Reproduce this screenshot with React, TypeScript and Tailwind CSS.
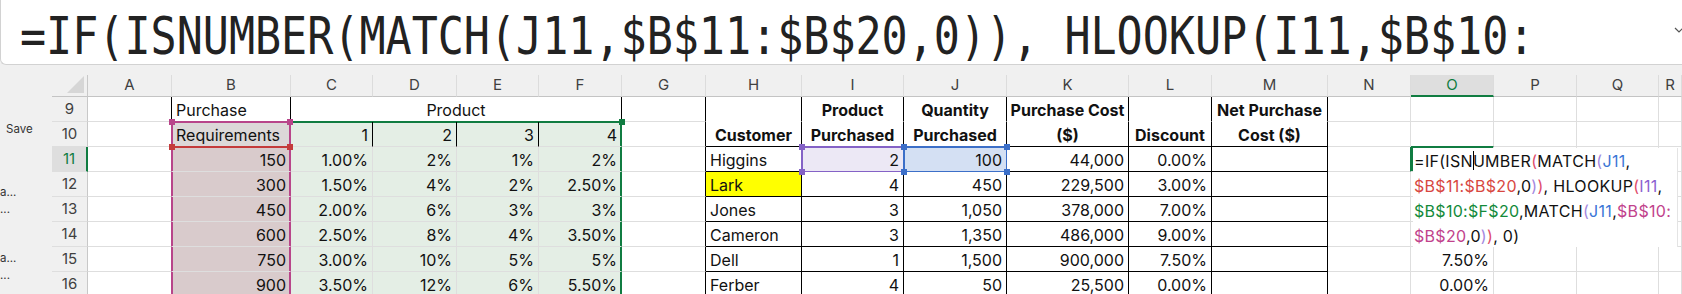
import React from 'react';

type Cell = {
  t?: React.ReactNode;
  al?: 'l' | 'r' | 'c';
  b?: boolean;
  bg?: string;
  br?: string;
  bb?: string;
  span?: string;
  fx?: string;
};

const COLS = ['A', 'B', 'C', 'D', 'E', 'F', 'G', 'H', 'I', 'J', 'K', 'L', 'M', 'N', 'O', 'P', 'Q', 'R'];

const BK = 'border-r-black';
const BBK = 'border-b-black';
const BBW = 'border-b-white';
const GRN = 'bg-[#e4eee5]';
const PNK = 'bg-[#d9cbcc]';
const MAGR = 'border-r-[#b8458a]';
const GRR = 'border-r-[#107c41]';

const ALIGN = { l: 'justify-start', r: 'justify-end', c: 'justify-center' };

const blank = (n: number): Cell[] => Array.from({ length: n }, () => ({}));

const data = [
  ['150', '1.00%', '2%', '1%', '2%', 'Higgins', '2', '100', '44,000', '0.00%'],
  ['300', '1.50%', '4%', '2%', '2.50%', 'Lark', '4', '450', '229,500', '3.00%'],
  ['450', '2.00%', '6%', '3%', '3%', 'Jones', '3', '1,050', '378,000', '7.00%'],
  ['600', '2.50%', '8%', '4%', '3.50%', 'Cameron', '3', '1,350', '486,000', '9.00%'],
  ['750', '3.00%', '10%', '5%', '5%', 'Dell', '1', '1,500', '900,000', '7.50%'],
  ['900', '3.50%', '12%', '6%', '5.50%', 'Ferber', '4', '50', '25,500', '0.00%'],
];

const head = (t: string, bb = BBW): Cell => ({ t, al: 'c', b: true, br: BK, bb });

const rows: { n: number; cells: Cell[] }[] = [
  {
    n: 9,
    cells: [
      { br: BK },
      { t: 'Purchase', al: 'l', br: BK, bb: 'border-b-[#b8458a]' },
      { t: 'Product', al: 'c', br: BK, bb: 'border-b-[#107c41]', span: 'col-span-4' },
      { br: BK },
      head(''),
      head('Product'),
      head('Quantity'),
      head('Purchase Cost'),
      head(''),
      head('Net Purchase'),
      ...blank(5),
    ],
  },
  {
    n: 10,
    cells: [
      { br: MAGR },
      {
        t: 'Requirements',
        al: 'l',
        bg: 'bg-[#dcd8d8]',
        br: MAGR,
        bb: 'border-b-[#c43b3b]',
        fx: 'shadow-[inset_1px_1px_0_#b8458a,inset_-1px_0_0_#b8458a]',
      },
      { t: '1', bg: GRN, br: BK, fx: 'shadow-[inset_0_1px_0_#107c41]' },
      { t: '2', bg: GRN, br: BK, fx: 'shadow-[inset_0_1px_0_#107c41]' },
      { t: '3', bg: GRN, br: BK, fx: 'shadow-[inset_0_1px_0_#107c41]' },
      { t: '4', bg: GRN, br: GRR, fx: 'shadow-[inset_0_1px_0_#107c41,inset_-1px_0_0_#107c41]' },
      { br: BK },
      head('Customer', BBK),
      head('Purchased', BBK),
      head('Purchased', BBK),
      head('($)', BBK),
      head('Discount', BBK),
      head('Cost ($)', BBK),
      {},
      { bb: 'border-b-[#107c41]' },
      ...blank(3),
    ],
  },
  ...data.map((d, i) => ({
    n: 11 + i,
    cells: [
      { br: MAGR },
      {
        t: d[0],
        bg: PNK,
        br: MAGR,
        fx:
          i === 0
            ? 'shadow-[inset_0_1px_0_#c43b3b,inset_1px_0_0_#b8458a,inset_-1px_0_0_#b8458a]'
            : 'shadow-[inset_1px_0_0_#b8458a,inset_-1px_0_0_#b8458a]',
      },
      { t: d[1], bg: GRN },
      { t: d[2], bg: GRN },
      { t: d[3], bg: GRN },
      { t: d[4], bg: GRN, br: GRR, fx: 'shadow-[inset_-1px_0_0_#107c41]' },
      { br: BK },
      { t: d[5], al: 'l', br: BK, bb: BBK, bg: i === 1 ? 'bg-[#ffff00]' : undefined },
      {
        t: d[6],
        br: BK,
        bb: BBK,
        bg: i === 0 ? 'bg-[#ece8f5]' : undefined,
        fx: i === 0 ? 'outline-2 -outline-offset-1 outline-[#8462c6]' : undefined,
      },
      {
        t: d[7],
        br: BK,
        bb: BBK,
        bg: i === 0 ? 'bg-[#d4e0f3]' : undefined,
        fx: i === 0 ? 'outline-2 -outline-offset-1 outline-[#3c6fc8]' : undefined,
      },
      { t: d[8], br: BK, bb: BBK },
      { t: d[9], br: BK, bb: BBK },
      { br: BK, bb: BBK },
      { br: i === 0 ? GRR : undefined },
      {
        t: i === 4 ? '7.50%' : i === 5 ? '0.00%' : undefined,
        fx: i === 0 ? 'shadow-[inset_2px_1px_0_#107c41]' : undefined,
      },
      {},
      {},
      {},
    ] as Cell[],
  })),
];

function SheetCell({ c }: { c: Cell }) {
  return (
    <div
      className={`flex items-end overflow-visible whitespace-nowrap border-r border-b px-[4px] pb-px leading-[19px] ${ALIGN[c.al ?? 'r']} ${c.b ? 'font-bold' : ''} ${c.bg ?? 'bg-white'} ${c.br ?? 'border-r-[#dedede]'} ${c.bb ?? 'border-b-[#dedede]'} ${c.span ?? ''} ${c.fx ?? ''}`}
    >
      {c.t}
    </div>
  );
}

const P2 = 'text-[#de4c6c]';
const P3 = 'text-[#a488e0]';
const RED = 'text-[#d8473f]';
const BLU = 'text-[#3b76d6]';
const PUR = 'text-[#8b60d0]';
const GR = 'text-[#138a3a]';
const MAG = 'text-[#c1428c]';

function Caret() {
  return (
    <span className="relative inline-block w-0">
      <span className="absolute left-0 top-[-16px] h-[19px] w-px bg-black" />
    </span>
  );
}

export default function App() {
  return (
    <div className="h-[294px] w-[1682px] overflow-hidden bg-[#f0f0f0] font-['Inter',sans-serif]">
      {/* formula bar */}
      <div className="relative h-[65px] overflow-hidden rounded-bl-[6px] border-b border-l border-[#d2d2d2] bg-white">
        <div className="whitespace-nowrap pl-[19px] pt-[10px]">
          <span className="inline-block origin-left scale-x-[0.834] font-['DejaVu_Sans_Mono',monospace] text-[52px] leading-[52px] text-[#222]">
            =IF(ISNUMBER(MATCH(J11,$B$11:$B$20,0)), HLOOKUP(I11,$B$10:
          </span>
        </div>
        <svg className="absolute left-[1673px] top-[27px]" width="10" height="6" viewBox="0 0 10 6">
          <polyline points="1,1 5,5 9,1" fill="none" stroke="#555" strokeWidth="1.2" />
        </svg>
      </div>

      <div className="mt-[10px] flex">
        {/* side panel */}
        <div className="flex w-[52px] flex-col text-[11.5px] leading-[16px] text-[#333]">
          <div className="ml-[6px] mt-[46px]">Save</div>
          <div className="mt-[47px]">a...</div>
          <div className="mt-px">...</div>
          <div className="mt-[33px]">a...</div>
          <div className="mt-px">...</div>
        </div>

        {/* sheet */}
        <div className="relative flex-1 text-[16px] text-[#111]">
          <div className="grid grid-cols-[36px_84px_119px_82px_84px_82px_83px_84px_96px_102px_103px_122px_83px_116px_83px_83px_83px_82px_1fr] grid-rows-[22px_repeat(8,25px)]">
            <div className="flex items-end justify-end border-r border-b border-r-[#c8c8c8] border-b-[#c4c4c4] bg-[#f0f0f0] pr-[3px] pb-[3px]">
              <svg width="17" height="17" viewBox="0 0 17 17">
                <polygon points="17,0 17,17 0,17" fill="#d6d6d6" />
              </svg>
            </div>
            {COLS.map((l) => (
              <div
                key={l}
                className={
                  l === 'O'
                    ? 'flex items-center justify-center border-r border-b-2 border-r-[#dcdcdc] border-b-[#107c41] bg-[#dedede] text-[15px] text-[#107c41]'
                    : 'flex items-center justify-center border-r border-b border-r-[#dcdcdc] border-b-[#c4c4c4] bg-[#f0f0f0] text-[15px] text-[#404040]'
                }
              >
                {l}
              </div>
            ))}
            {rows.map((r) => (
              <React.Fragment key={r.n}>
                <div
                  className={
                    r.n === 11
                      ? 'flex items-center justify-center border-r-2 border-b border-r-[#107c41] border-b-[#dedede] bg-[#dedede] text-[15px] text-[#107c41]'
                      : 'flex items-center justify-center border-r border-b border-r-[#c8c8c8] border-b-[#dedede] bg-[#f0f0f0] text-[15px] text-[#404040]'
                  }
                >
                  {r.n}
                </div>
                {r.cells.map((c, i) => (
                  <SheetCell key={i} c={c} />
                ))}
              </React.Fragment>
            ))}
          </div>

          {/* range corner handles */}
          <div className="absolute left-[117px] top-[44px] h-[6px] w-[6px] bg-[#b8458a]" />
          <div className="absolute left-[235px] top-[44px] h-[6px] w-[6px] bg-[#b8458a]" />
          <div className="absolute left-[117px] top-[69px] h-[6px] w-[6px] bg-[#c43b3b]" />
          <div className="absolute left-[235px] top-[69px] h-[6px] w-[6px] bg-[#c43b3b]" />
          <div className="absolute left-[567px] top-[44px] h-[6px] w-[6px] bg-[#107c41]" />
          <div className="absolute left-[747px] top-[69px] h-[6px] w-[6px] bg-[#8462c6]" />
          <div className="absolute left-[747px] top-[94px] h-[6px] w-[6px] bg-[#8462c6]" />
          <div className="absolute left-[849px] top-[69px] h-[6px] w-[6px] bg-[#3c6fc8]" />
          <div className="absolute left-[952px] top-[69px] h-[6px] w-[6px] bg-[#3c6fc8]" />
          <div className="absolute left-[849px] top-[94px] h-[6px] w-[6px] bg-[#3c6fc8]" />
          <div className="absolute left-[952px] top-[94px] h-[6px] w-[6px] bg-[#3c6fc8]" />

          {/* in-cell editor over O11 */}
          <div className="absolute left-[1361px] top-[73px] h-[99px] w-[265px] whitespace-nowrap border-r border-r-[#e4e4e4] bg-white pl-px pt-px leading-[25px] tracking-[0.3px]">
            <div>
              =IF(ISN<Caret />UMBER<span className={P2}>(</span>MATCH<span className={P3}>(</span>
              <span className={BLU}>J11</span>,
            </div>
            <div>
              <span className={RED}>$B$11:$B$20</span>,0<span className={P3}>)</span>
              <span className={P2}>)</span>, HLOOKUP<span className={P2}>(</span>
              <span className={PUR}>I11</span>,
            </div>
            <div>
              <span className={GR}>$B$10:$F$20</span>,MATCH<span className={P3}>(</span>
              <span className={BLU}>J11</span>,<span className={MAG}>$B$10:</span>
            </div>
            <div>
              <span className={MAG}>$B$20</span>,0<span className={P3}>)</span>
              <span className={P2}>)</span>, 0)
            </div>
          </div>
        </div>
      </div>
    </div>
  );
}
